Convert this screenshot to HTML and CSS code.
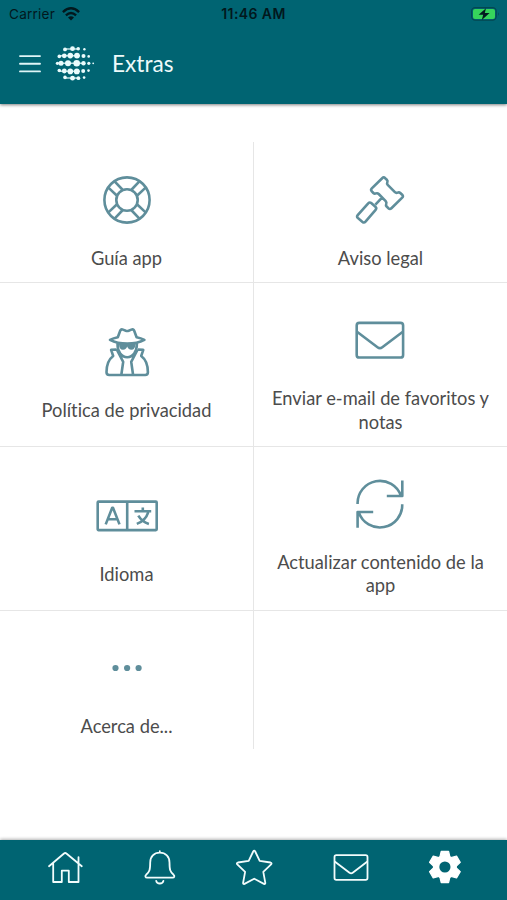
FILE: index.html
```html
<!DOCTYPE html>
<html lang="es">
<head>
<meta charset="utf-8">
<title>Extras</title>
<link rel="stylesheet" href="styles.css">
</head>
<body>
<div class="app">
  <header class="header">
    <div class="status">
      <div class="carrier"><span>Carrier</span>
        <svg width="18" height="14" viewBox="0 0 18 14" fill="none" stroke="currentColor" stroke-width="2.4"><path d="M.9 5.1Q9-2.4 17.1 5.1M3.9 8.3Q9 3.8 14.1 8.3"/><path d="M6 10.4Q9 8 12 10.4L9 13.4Z" fill="currentColor" stroke="none"/></svg>
      </div>
      <div class="clock">11:46 AM</div>
      <svg class="battery" width="29" height="14" viewBox="0 0 29 14"><rect x=".6" y=".6" width="24.6" height="12.6" rx="3.6" fill="none" stroke="#044650" stroke-width="1.1"/><rect x="2" y="2" width="22" height="10" rx="2" fill="#36d45c"/><path d="M27 5q1.6 2 0 4z" fill="#044650"/><path d="M15 1.2 7.6 7.8h4.6L10.8 13l7.8-6.9h-4.8z" fill="#021a20"/></svg>
    </div>
    <div class="toolbar">
      <svg class="menu" width="22" height="20" viewBox="0 0 22 20" fill="none" stroke="#dff5f7" stroke-width="1.9" stroke-linecap="round"><path d="M1 2.1h20M1 9.7h20M1 17.4h20"/></svg>
      <svg class="logo" width="40" height="40" viewBox="0 0 40 40" fill="#e9fbfc"><path d="M10 4.9h14M5 11.7h20M3 19.3h24M5 27.2h20M10 34h14" stroke="#b9dce0" stroke-width="1.5"/><circle cx="10" cy="5.4" r="1.9"/><circle cx="17.5" cy="4.7" r="2.4"/><circle cx="23.2" cy="4.8" r="1.8"/><circle cx="29.4" cy="5.3" r="1.2"/><circle cx="4.3" cy="12.4" r="1.8"/><circle cx="9.3" cy="11.8" r="2.4"/><circle cx="15.3" cy="11.6" r="2.8"/><circle cx="22" cy="11.6" r="2.9"/><circle cx="28.5" cy="12" r="2"/><circle cx="33.7" cy="12.4" r="1.3"/><circle cx="2.4" cy="19.3" r="1.6"/><circle cx="6" cy="19.3" r="2.5"/><circle cx="13" cy="19.3" r="3"/><circle cx="21.7" cy="19.3" r="3.3"/><circle cx="28.5" cy="19.3" r="2.2"/><circle cx="33.8" cy="19.3" r="1.6"/><circle cx="38.2" cy="19.3" r=".9"/><circle cx="4.3" cy="26.5" r="1.8"/><circle cx="9.3" cy="27" r="2.4"/><circle cx="15.3" cy="27.4" r="2.8"/><circle cx="21.8" cy="27.4" r="2.9"/><circle cx="28.2" cy="27" r="2"/><circle cx="33.5" cy="26.6" r="1.3"/><circle cx="10" cy="33.4" r="1.8"/><circle cx="17.5" cy="34.2" r="2.4"/><circle cx="23.4" cy="34.2" r="1.9"/><circle cx="29.1" cy="33.6" r="1.3"/></svg>
      <h1 class="title">Extras</h1>
    </div>
  </header>

  <main class="grid">
    <a class="cell">
      <svg class="icon" viewBox="0 0 64 48"><circle cx="32" cy="24" r="22.6"/><circle cx="32" cy="24" r="10.7"/><path d="m19.6 5.4 8.2 8.6M13.4 11.6l8.6 8.2M44.4 5.4 36.2 14M50.6 11.6 42 19.8M19.6 42.6l8.2-8.6M13.4 36.4l8.6-8.2M44.4 42.6 36.2 34M50.6 36.4 42 28.2"/></svg>
      <span class="label">Guía app</span>
    </a>
    <a class="cell">
      <svg class="icon" viewBox="0 0 64 48"><path d="M34.2 2.2q1.5-1.5 3 0l1.6 1.5q1.2 1.2.5 2.6-.7 1.5.4 2.6l7.2 7.2q1.2 1.2 2.8.5 1.4-.7 2.6.4l1.9 1.8q1.5 1.4 0 2.9L43.4 32.3q-1.5 1.5-2.9 0l-1.8-1.8q-1.1-1.2-.5-2.6.6-1.6-.5-2.8l-7-7.1q-1.2-1.2-2.7-.6-1.5.7-2.6-.4l-1.6-1.7q-1.4-1.5 0-2.9zM34 21.6l-6.6 7M20.2 27.3q1.5-1.5 3-.2l4.2 3.7q1.6 1.4.2 3L17.5 45.7q-1.4 1.5-3 .2l-4.6-3.8q-1.6-1.4-.2-3z"/></svg>
      <span class="label">Aviso legal</span>
    </a>
    <a class="cell">
      <svg class="icon" viewBox="0 0 64 48"><path d="m22.8 9.3 2.4-6.5q.8-2 2.8-1.2l2.8 1.1q1.4.5 2.8 0l2.8-1.1q2-.8 2.8 1.2l2.4 6.5q4.4.9 7.8 2.6-7.2 3.7-17.2 3.7T15 11.9q3.4-1.7 7.8-2.6zM22.5 15.5c0 8.5 4 13.7 9.7 13.7s9.7-5.2 9.7-13.7M21.5 21.5l-5.4.4 2.1 6.1c-4.6 3.4-6.7 8-6.7 16.3q0 2.7 2.7 2.7h36q2.7 0 2.7-2.7c0-8.3-2.1-12.9-6.7-16.3l2.1-6.1-5.4-.4M21.7 21.5l6.5 12.3L26.3 47M42.7 21.5l-6.5 12.3L38.1 47"/><path d="M24 16h16.4c0 3.8-1.4 5.8-4 5.8-2.3 0-3.6-1.3-4.2-3.2-.6 1.9-1.9 3.2-4.2 3.2-2.6 0-4-2-4-5.8z" fill="currentColor" stroke="none"/></svg>
      <span class="label">Política de privacidad</span>
    </a>
    <a class="cell">
      <svg class="icon" viewBox="0 0 64 48"><rect x="8.7" y="6.9" width="46.4" height="34.6" rx="2.6"/><path d="m9.3 16 20.2 15.3q2.4 1.8 4.8 0L54.5 16"/></svg>
      <span class="label">Enviar e-mail de favoritos y notas</span>
    </a>
    <a class="cell">
      <svg class="icon" viewBox="0 0 64 48"><rect x="2.7" y="9.6" width="59" height="28.5" rx=".8"/><path d="M32.2 10v28M10.7 32.4l6.5-16.6h.8l6.5 16.6M13 27.3h9.2M39.5 19.3h16.7M47.8 15.4v3.9M53.2 20.3q-2.6 8.2-11.4 11.6M43.3 23.6q3.7 6.2 10.6 8.3"/></svg>
      <span class="label">Idioma</span>
    </a>
    <a class="cell">
      <svg class="icon" viewBox="0 0 64 48"><path d="M9.6 24A22.3 22.3 0 0 1 53 16M54.3.6V16H38.8M54.2 24.3A22.3 22.3 0 0 1 10.8 32.3M9.6 47.7V32H25.2"/></svg>
      <span class="label">Actualizar contenido de la app</span>
    </a>
    <a class="cell">
      <svg class="icon" viewBox="0 0 64 48"><g fill="currentColor" stroke="none"><circle cx="20.5" cy="24" r="3.1"/><circle cx="32.1" cy="24" r="3.1"/><circle cx="43.6" cy="24" r="3.1"/></g></svg>
      <span class="label">Acerca de...</span>
    </a>
    <div class="cell"></div>
  </main>

  <nav class="tabs">
    <svg viewBox="0 0 40 40"><path d="m4 19.2 15-12.7q1.2-1 2.4 0l15.4 12.7M8.2 16.5V35h8.6V23.7h7V35h9.7V10.2"/></svg>
    <svg viewBox="0 0 40 40"><path d="M19.8 4.2v1.5M19.8 5.7c-5.8 0-9.6 4-9.6 9.7 0 7.5-.6 9.5-4.1 12.4-1.3 1.2-.8 2.9 1 2.9h25.5c1.8 0 2.3-1.7 1-2.9-3.5-2.9-4.1-4.9-4.1-12.4 0-5.7-3.9-9.7-9.7-9.7zM16.2 33.8c.7 3.6 6.5 3.6 7.2 0"/></svg>
    <svg viewBox="0 0 40 40"><path d="M18.2 4.5q1-1.6 2 0l4.5 9.4 10.8 1.6q1.7.5.6 1.8l-7.8 7.5 2 11q.1 1.6-1.4 1.1l-9.7-5.2-9.7 5.2q-1.5.5-1.4-1.1l2-11-7.8-7.5q-1.1-1.3.6-1.8l10.8-1.6z"/></svg>
    <svg viewBox="0 0 40 40"><rect x="4.5" y="8.1" width="33" height="24.8" rx="1.8"/><path d="m5 14.8 14.5 11q1.6 1.2 3.2 0l14.4-11"/></svg>
    <svg viewBox="0 0 40 40"><defs><path id="tooth" d="M-5-10-3.7-15.6H3.7L5-10z"/></defs><g transform="translate(19.9 20)" fill="#fff" stroke="none"><circle r="12"/><g stroke="#fff" stroke-width="1.2"><use href="#tooth"/><use href="#tooth" transform="rotate(60)"/><use href="#tooth" transform="rotate(120)"/><use href="#tooth" transform="rotate(180)"/><use href="#tooth" transform="rotate(240)"/><use href="#tooth" transform="rotate(300)"/></g><circle r="5.6" fill="#006472"/></g></svg>
  </nav>
</div>
</body>
</html>
```
FILE: styles.css
```css
* { box-sizing: border-box; }
body { margin: 0; background: #fff; font-family: Lato, "Liberation Sans", sans-serif; font-variant-ligatures: none; }
.app { display: flex; flex-direction: column; width: 507px; height: 900px; overflow: hidden; }
.header { height: 103.5px; flex: none; background: #006472; box-shadow: 0 1px 3px rgba(0, 0, 0, .5); }
.status {
  display: grid; grid-template-columns: 1fr auto 1fr; align-items: center;
  height: 27px; padding: 0 7px 0 9px;
  font-family: Inter, sans-serif; font-size: 13.6px; color: #02181d;
}
.carrier { display: flex; align-items: center; gap: 7px; letter-spacing: .2px; }
.clock { margin-right: 2px; font-weight: 600; font-size: 14px; letter-spacing: .4px; }
.battery { justify-self: end; }
.toolbar { display: flex; align-items: center; height: 73px; padding-left: 19px; }
.logo { margin-left: 14px; }
.title { margin: 0 0 0 17px; font-size: 22.6px; line-height: 28px; font-weight: 400; color: #eefafa; }
.grid {
  flex: 1; display: grid; align-content: start; margin-top: 38.5px;
  grid-template-columns: 254px 253px;
  grid-template-rows: 141px 163.5px 164px 138px;
}
.cell {
  display: flex; flex-direction: column; align-items: center; justify-content: center;
  padding: 34px 14px 12px; border-bottom: 1px solid #e6e6e6;
}
.cell:nth-child(odd) { border-right: 1px solid #e6e6e6; }
.cell:nth-child(even) .icon { margin-right: 1px; }
.cell:nth-last-child(-n+2) { padding: 33px 14px 10px; border-bottom: 0; }
.icon {
  display: block; flex: none; width: 64px; height: 48px; overflow: visible; color: #5f8e9b;
  fill: none; stroke: currentColor; stroke-width: 2.6; stroke-linejoin: round;
}
.label { margin-top: 22.7px; font-size: 18.3px; line-height: 23.5px; text-align: center; color: #4c4c4c; }
.tabs {
  flex: none; display: grid; grid-template-columns: repeat(5, 1fr); justify-items: center;
  height: 60px; padding: 7px 15px 0 17px;
  background: #006472; box-shadow: 0 -1px 3px rgba(0, 0, 0, .3);
}
.tabs svg {
  width: 40px; height: 40px; fill: none; stroke: #f2fcfc;
  stroke-width: 1.8; stroke-linecap: round; stroke-linejoin: round;
}
```
